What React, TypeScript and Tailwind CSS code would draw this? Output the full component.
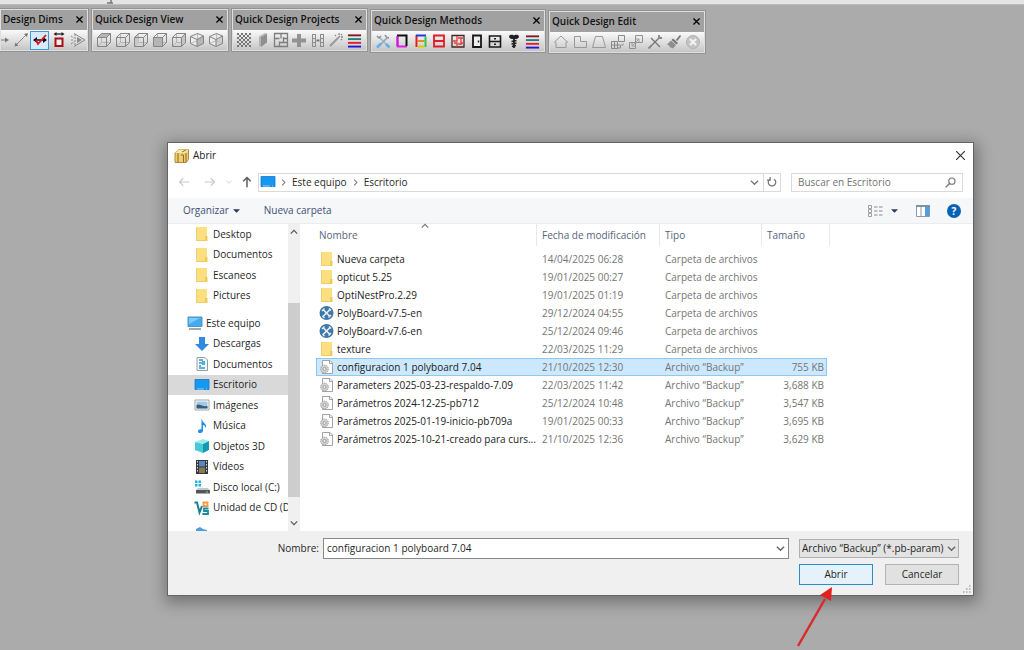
import { useState } from "react";
import type { ReactNode } from "react";

interface SvgProps {
  children: ReactNode;
  className?: string;
}

function Glyph({ children, className = "size-4" }: SvgProps) {
  return (
    <svg viewBox="0 0 16 16" fill="none" className={`${className} shrink-0`} aria-hidden="true">
      {children}
    </svg>
  );
}

/* ---------- toolbar icons ---------- */

function Cube({ face }: { face: "top" | "none" | "left" | "front" | "right" }) {
  return (
    <Glyph>
      <path d="M5.5 1.5h9v9h-9zM1.5 14.5l4-4" stroke="#b4b4b4" />
      {face === "top" && <path d="M1.5 5.5l4-4h9l-4 4z" fill="#b5b5b5" />}
      {face === "left" && <path d="M1.5 5.5l4-4v9l-4 4z" fill="#c9c9c9" />}
      {face === "front" && <path d="M1.5 5.5h9v9h-9z" fill="#b5b5b5" />}
      {face === "right" && <path d="M10.5 5.5l4-4v9l-4 4z" fill="#c4c4c4" />}
      <path d="M1.5 5.5h9v9h-9zM1.5 5.5l4-4h9v9l-4 4M10.5 5.5l4-4" stroke="#858585" />
    </Glyph>
  );
}

function IsoCube({ side }: { side: "left" | "right" }) {
  return (
    <Glyph>
      <path d="M1.5 4.5L8.500 1.500l6 2.500v7.500L8 14.500l-6.500-3z" fill="#ececec" />
      <path d={side === "left" ? "M8 7.500l6.500-3.500v7.500L8 14.500z" : "M8 7.500l6.500-3.500v7.500L8 14.500z"} fill={side === "left" ? "#b5b5b5" : "#cfcfcf"} />
      <path d="M1.500 11.500L8.500 8.500l6 3M8.500 1.500v7" stroke="#bbb" />
      <path d="M1.500 4.500L8.500 1.500l6 2.500v7.500L8 14.500l-6.500-3zM1.500 4.500L8 7.500l6.500-3.500M8 7.500v7" stroke="#858585" />
    </Glyph>
  );
}

const dims: [string, ReactNode][] = [
  ["Cota horizontal", <Glyph><path d="M0 8h12" stroke="#777" /><path d="M11 5.500L15 8l-4 2.500z" fill="#777" /></Glyph>],
  ["Cota diagonal", <Glyph><path d="M3 13L14 2" stroke="#888" /><path d="M1.500 14.500l1-4 3 3zM15 1l-4 1 3 3z" fill="#777" /></Glyph>],
  ["Cota rápida", <Glyph><path d="M2 8h12" stroke="#111" strokeWidth="1.500" /><path d="M1 8l4-3v6zM15 8l-4-3v6z" fill="#111" /><path d="M4 8l2 4 8-9" stroke="#d9141e" strokeWidth="1.800" /></Glyph>],
  ["Cota total", <Glyph><path d="M4 2h8" stroke="#222" strokeWidth="1.300" /><path d="M2.500 2l3-2v4zM13.500 2l-3-2v4z" fill="#222" /><path d="M4.500 6.500h7v7.500h-7z" stroke="#a80f17" strokeWidth="2" fill="#eee" /></Glyph>],
  ["Cota de ángulo", <Glyph><path d="M4 1.500L15 8 4 14.500" stroke="#888" /><path d="M5 2v12M1 4l3 2M1 8h3M1 12l3-2" stroke="#888" strokeDasharray="2 1" /><path d="M7 5l5 3-5 3z" fill="#8a8a8a" /></Glyph>],
];

const views: [string, ReactNode][] = [
  ["Arriba", <Cube face="top" />],
  ["Abajo", <Cube face="none" />],
  ["Izquierda", <Cube face="left" />],
  ["Frente", <Cube face="front" />],
  ["Derecha", <Cube face="right" />],
  ["Isométrica", <IsoCube side="left" />],
  ["Isométrica trasera", <IsoCube side="right" />],
];

const Stripes = () => (
  <Glyph className="size-[15px]">
    <path d="M1 2.500h14" stroke="#7d1c20" strokeWidth="2" />
    <path d="M1 6.500h14" stroke="#237f7c" strokeWidth="2" />
    <path d="M1 10.500h14" stroke="#e31d2b" strokeWidth="2" />
    <path d="M1 14.500h14" stroke="#2418d4" strokeWidth="2" />
  </Glyph>
);

const projects: [string, ReactNode][] = [
  ["Material", <Glyph>{[1, 3, 5, 7, 9, 11, 13].map((y, i) => <path key={y} d={i % 2 ? `M3 ${y + 1}h12` : `M1 ${y + 1}h14`} stroke="#777" strokeWidth="2" strokeDasharray="2 2" />)}</Glyph>],
  ["Panel", <Glyph><path d="M6 5l6-3.500v9L6 15z" fill="#8f8f8f" /><path d="M4 4.500l6-3.500 2 .500L6 5v10l-2-1z" fill="#b3b3b3" /></Glyph>],
  ["Plano", <Glyph><path d="M1.500 1.500h13v13h-13zM8 1.500v5M1.500 6.500h5M10 6.500h4.500M6.500 9.500v5M6.500 10.500h8M10.500 5v5" stroke="#7d7d7d" strokeWidth="1.300" /></Glyph>],
  ["Añadir", <Glyph><path d="M6 2h4v4.500h5v4h-5V15H6v-4.500H1v-4h5z" fill="#929292" /></Glyph>],
  ["Módulos", <Glyph><path d="M2.500 2v12.500M5.500 2v12.500M10.500 2v12.500M13.500 2v12.500M2 2.500h4M2 6.500h4M2 10.500h4M2 14.500h4M10 2.500h4M10 6.500h4M10 10.500h4M10 14.500h4" stroke="#8c8c8c" /><path d="M6.500 8.500h3" stroke="#777" strokeWidth="2" /></Glyph>],
  ["Asistente", <Glyph><path d="M2 14l8-8" stroke="#999" strokeWidth="2" /><path d="M10 6l2-2M11 1v2M15 5h-2M14 2l-1 1M13 7l1 1M7 3l1 1" stroke="#888" strokeWidth="1.300" /></Glyph>],
  ["Capas", <Stripes />],
];

const methods: [string, ReactNode][] = [
  ["Herramientas", <Glyph><path d="M4 4l8 8" stroke="#8fbbd8" strokeWidth="1.600" /><path d="M12 5l-8 8" stroke="#96a4ad" strokeWidth="1.600" /><path d="M2 3l2 2 2-2M10 2c1 2 2 3 4 3" stroke="#84949e" strokeWidth="1.500" /><path d="M2 14.500l4-4M11 11l3.500 3.500" stroke="#64b1e6" strokeWidth="2.600" /></Glyph>],
  ["Estructura", <Glyph><path d="M3.500 3v11M3 13.500h10" stroke="#e31ee8" strokeWidth="2" /><path d="M3 2.500h9.500V13" stroke="#111" strokeWidth="2" /><path d="M3.500 3.500V13" stroke="#c51ed0" strokeWidth="2" /></Glyph>],
  ["Zonas", <Glyph><path d="M3.500 2v12" stroke="#e51c24" strokeWidth="2" /><path d="M3 2.500h10" stroke="#2438df" strokeWidth="2" /><path d="M12.500 3.500v10.500" stroke="#25c94b" strokeWidth="2" /><path d="M4.500 8h7" stroke="#e8892a" strokeWidth="2" /><path d="M4.500 13.500h7" stroke="#dcc80d" strokeWidth="2" /></Glyph>],
  ["Estantes", <Glyph><path d="M3 2.500h10v11H3zM3 8h10" stroke="#df1c27" strokeWidth="1.800" /></Glyph>],
  ["Divisiones", <Glyph><path d="M2 2.500h12v11.500H2z" stroke="#472529" strokeWidth="1.300" /><path d="M7 3v5H3M8 5h5M11 5v5h3M7 14v-4H4M8 11h4" stroke="#e3403b" strokeWidth="1.300" /></Glyph>],
  ["Puerta", <Glyph><path d="M4 2.500h8v11.500H4z" stroke="#171717" strokeWidth="1.800" fill="#eee" /><path d="M9.500 7.500v2" stroke="#222" strokeWidth="1.500" /></Glyph>],
  ["Cajones", <Glyph><path d="M2.500 3h11v11h-11zM2.500 8.500h11" stroke="#191919" strokeWidth="1.600" /><path d="M7 5.800h2M7 11.300h2" stroke="#222" strokeWidth="1.500" /></Glyph>],
  ["Herrajes", <Glyph><path d="M3 3.500C3 1.500 7 1.500 8 2.500c1-1 5-1 5 1S10.500 6 9.500 6h-3C5.500 6 3 5.500 3 3.500z" fill="#202020" /><path d="M8 6v9" stroke="#202020" strokeWidth="1.800" /><path d="M5.500 8.500l5-1M5.500 11l5-1M6 13.500l4-1" stroke="#202020" strokeWidth="1.300" /></Glyph>],
  ["Capas", <Stripes />],
];

const edits: [string, ReactNode][] = [
  ["Casa", <Glyph><path d="M1.500 8L8 2l6.500 6-1.500.500v5H3v-5z" stroke="#999" /></Glyph>],
  ["Esquina", <Glyph><path d="M2.500 2.500h6v5h6v6h-12z" stroke="#999" /></Glyph>],
  ["Trapecio", <Glyph><path d="M4.500 2.500h7l3 11h-13z" stroke="#999" /></Glyph>],
  ["Dividir", <Glyph><path d="M8.500 1.500h6v6h-6zM1.500 7.500h6v7h-6zM1.500 11h6M4.500 7.500v7M7.500 11h3v3h-3" stroke="#898989" /><path d="M11 11l3-2-1 3z" fill="#999" /></Glyph>],
  ["Escalar", <Glyph><path d="M7.500 1.500h7v7h-7zM1.500 8.500h6v6h-6z" stroke="#909090" /><path d="M4 12l7-7M8 5h3v3M4 9v3h3" stroke="#a0a0a0" /></Glyph>],
  ["Cortar", <Glyph><path d="M4 4l9 9M3 13L13 3" stroke="#777" strokeWidth="1.400" /><path d="M1.500 14.500l3-3M12 1l0 3 3 0" stroke="#888" strokeWidth="1.800" /></Glyph>],
  ["Pincel", <Glyph><path d="M14.500 1.500l-4 5" stroke="#777" strokeWidth="1.800" /><path d="M7 4.500l5 4.500-1.500 1.500-5-4.500z" fill="#777" /><path d="M5 6.500l5 4.500-3 3.500-2-1-1 0-1-2-2-1z" fill="#8f8f8f" /></Glyph>],
  ["Cancelar", <Glyph><circle cx="8" cy="8" r="6.500" fill="#c3c3c3" stroke="#b3b3b3" /><path d="M5 5l6 6M11 5l-6 6" stroke="#f2f2f2" strokeWidth="2.200" /></Glyph>],
];

interface ToolbarProps {
  title: string;
  tools: [string, ReactNode][];
  className: string;
  active?: number;
  cut?: boolean;
}

function Toolbar({ title, tools, className, active, cut }: ToolbarProps) {
  return (
    <section className={`${className} shrink-0 overflow-hidden border border-[#dedede] shadow-[0_0_0_1px_#939393]`}>
      <header className="flex h-5 items-center justify-between bg-[#a1a1a1] pb-0.5 pl-0.5 pr-0.5">
        <h2 className="whitespace-nowrap text-[10px] font-semibold text-[#111]">{title}</h2>
        <button aria-label={`Cerrar ${title}`} className="p-0.5 text-black">
          <svg viewBox="0 0 8 8" className="size-[7px]"><path d="M.500.500l7 7M7.500.500l-7 7" stroke="currentColor" strokeWidth="1.500" /></svg>
        </button>
      </header>
      <div className={`flex h-5 items-center bg-linear-to-b from-[#fafafa] to-[#c6c6c6] ${cut ? "justify-end" : "px-0.5"}`}>
        {tools.map(([label, icon], i) => (
          <button
            key={label}
            aria-label={label}
            className={`flex h-[19px] items-center justify-center ${cut ? "w-[19px] shrink-0" : "min-w-0 flex-1"} ${i === active ? "border border-[#3c9bd6] bg-[#d5ebf9]" : ""}`}
          >
            {icon}
          </button>
        ))}
      </div>
    </section>
  );
}

/* ---------- file icons ---------- */

const Folder = () => (
  <Glyph>
    <path d="M2 1h11v14H2z" fill="#fbdf80" />
    <path d="M2 1h1v14H2z" fill="#f0cf6c" />
    <path d="M11 10h2.500v5H11z" fill="#f0c95a" />
    <path d="M2 14.500h11" stroke="#f0cc66" />
  </Glyph>
);

const BackupFile = () => (
  <Glyph>
    <path d="M3.500 1.500h7.500l2.500 2.500v10.500H3.500z" fill="#fdfdfd" stroke="#a3a3a3" />
    <path d="M10.500 1.500V4.500h3" stroke="#a3a3a3" />
    <circle cx="5.500" cy="10" r="3.800" fill="#d8d8d8" stroke="#999" strokeDasharray="1.500 .6" />
    <circle cx="5.500" cy="10" r="1.600" fill="#eee" stroke="#999" />
  </Glyph>
);

const PolyBoard = () => (
  <Glyph>
    <circle cx="7.500" cy="8" r="7" fill="#3f78a8" />
    <path d="M4 4.500l7 7M11 4.500l-7 7" stroke="#e7f1f8" strokeWidth="1.600" />
    <path d="M3 6l2.500-2.500M9.500 12.500L12 10M10 3.500L12 5.500M3.500 11l2 2" stroke="#e7f1f8" strokeWidth="1.400" />
  </Glyph>
);

const Screen = () => (
  <Glyph>
    <path d="M1 2.500h14v10H1z" fill="#1697f0" />
    <path d="M1 2.500h14v10H1z" stroke="#0d79cc" strokeWidth=".8" />
    <path d="M3 12h7M12 12h1" stroke="#b6e0ff" strokeWidth=".8" />
  </Glyph>
);

const Computer = () => (
  <Glyph>
    <path d="M1 2h14v9.500H1z" fill="#42aaf0" stroke="#5792bb" />
    <path d="M2 3h11L2 9z" fill="#79cdfb" />
    <path d="M2 14h12" stroke="#7c8d98" strokeWidth="1.500" />
  </Glyph>
);

interface Place {
  name: string;
  icon: ReactNode;
  root?: boolean;
  current?: boolean;
}

const quickAccess: Place[] = ["Desktop", "Documentos", "Escaneos", "Pictures"].map((name) => ({ name, icon: <Folder /> }));

const thisPc: Place[] = [
  { name: "Este equipo", icon: <Computer />, root: true },
  { name: "Descargas", icon: <Glyph><path d="M5 1h6v7h4l-7 7-7-7h4z" fill="#2f8be0" /></Glyph> },
  { name: "Documentos", icon: <Glyph><path d="M3 1.500h8l2.500 2.500v10.500H3z" fill="#f4f8fa" stroke="#8ea0aa" /><path d="M5 4h4M5 7h6M5 10h2M5 12h6" stroke="#369bc9" strokeWidth="1.300" /><path d="M8 5h3v4H8z" fill="#4ab1d6" /></Glyph> },
  { name: "Escritorio", icon: <Screen />, current: true },
  { name: "Imágenes", icon: <Glyph><path d="M1 3h14v10H1z" fill="#fff" stroke="#9ba5aa" /><path d="M2.500 4.500h11v7h-11z" fill="#9ecbe8" /><path d="M2.500 8c3-2 5 2 11 1v2.500h-11z" fill="#375f7b" /></Glyph> },
  { name: "Música", icon: <Glyph><path d="M8 1c0 4 5 4 4 9-1-2-2-3-3-3v5.500c0 3-5 3.500-5 1 0-2 2-2.500 3.500-2V1z" fill="#1b8ee5" /></Glyph> },
  { name: "Objetos 3D", icon: <Glyph><path d="M1 4l8-3 6 2-6 3z" fill="#9deaf0" /><path d="M1 4l8 2v9l-8-3z" fill="#47c9d8" /><path d="M9 6l6-3v9l-6 3z" fill="#1599b0" /></Glyph> },
  { name: "Vídeos", icon: <Glyph><path d="M2 1h12v14H2z" fill="#333941" /><path d="M5 2h6v5.500H5z" fill="#5b85bd" /><path d="M5 8.500h6V14H5z" fill="#8a7951" /><path d="M3.500 2v12M12.500 2v12" stroke="#d8d8d8" strokeDasharray="1.500 1.500" /></Glyph> },
  { name: "Disco local (C:)", icon: <Glyph><path d="M1 1.500h2.500V4H1zM4.500 1.500H7V4H4.500zM1 5h2.500v2.500H1zM4.500 5H7v2.500H4.500z" fill="#20b2df" /><path d="M4 9h10l2 2.500H2z" fill="#c3c8cb" /><path d="M2 11h14v3.500H2z" fill="#50585e" /><path d="M12 13h2" stroke="#7fe07b" /></Glyph> },
  { name: "Unidad de CD (D", icon: <Glyph><path d="M.500 2.500H3l2.500 10L8 6" stroke="#168098" strokeWidth="2" /><path d="M14.500 8.500H10v2.500h4v3H8.500" stroke="#1a8b9f" strokeWidth="1.800" /><path d="M9.500 2.500h4V6h-4z" stroke="#f39a43" strokeWidth="1.800" /></Glyph> },
];

function PlaceList({ places, className }: { places: Place[]; className: string }) {
  return (
    <ul className={`grid auto-rows-fr ${className}`}>
      {places.map((p) => (
        <li key={p.name} className={`flex items-center ${p.current ? "bg-[#d9d9d9]" : ""}`}>
          <a href="#" className={`flex items-center gap-[3px] whitespace-nowrap ${p.root ? "pl-[19px]" : "pl-[26px]"}`}>
            {p.icon}
            {p.name}
          </a>
        </li>
      ))}
    </ul>
  );
}

interface FileRow {
  name: string;
  date: string;
  kind: "folder" | "app" | "backup";
  size?: string;
}

const files: FileRow[] = [
  { name: "Nueva carpeta", date: "14/04/2025 06:28", kind: "folder" },
  { name: "opticut 5.25", date: "19/01/2025 00:27", kind: "folder" },
  { name: "OptiNestPro.2.29", date: "19/01/2025 01:19", kind: "folder" },
  { name: "PolyBoard-v7.5-en", date: "29/12/2024 04:55", kind: "app" },
  { name: "PolyBoard-v7.6-en", date: "25/12/2024 09:46", kind: "app" },
  { name: "texture", date: "22/03/2025 11:29", kind: "folder" },
  { name: "configuracion 1 polyboard 7.04", date: "21/10/2025 12:30", kind: "backup", size: "755 KB" },
  { name: "Parameters 2025-03-23-respaldo-7.09", date: "22/03/2025 11:42", kind: "backup", size: "3,688 KB" },
  { name: "Parámetros 2024-12-25-pb712", date: "25/12/2024 10:48", kind: "backup", size: "3,547 KB" },
  { name: "Parámetros 2025-01-19-inicio-pb709a", date: "19/01/2025 00:33", kind: "backup", size: "3,695 KB" },
  { name: "Parámetros 2025-10-21-creado para curs...", date: "21/10/2025 12:36", kind: "backup", size: "3,629 KB" },
];

const fileIcons = { folder: <Folder />, app: <PolyBoard />, backup: <BackupFile /> };

function Chevron({ className = "size-2", d = "M1 3l4 4 4-4" }: { className?: string; d?: string }) {
  return (
    <svg viewBox="0 0 10 10" fill="none" className={className} aria-hidden="true">
      <path d={d} stroke="currentColor" strokeWidth="1.500" />
    </svg>
  );
}

function FileTable() {
  const [selected, setSelected] = useState("configuracion 1 polyboard 7.04");

  return (
    <table className="w-[514px] table-fixed border-separate border-spacing-0 text-left">
      <colgroup>
        <col className="w-[221px]" />
        <col className="w-[123px]" />
        <col className="w-[102px]" />
        <col className="w-[65px]" />
        <col className="w-[3px]" />
      </colgroup>
      <thead className="text-[#56647c]">
        <tr className="h-[22px]">
          <th className="relative border-r border-[#e8e8e8] p-0 pl-[3px] font-normal">
            Nombre
            <Chevron d="M1 7l4-4 4 4" className="absolute -top-0.5 left-[105px] size-2 text-[#777]" />
          </th>
          <th className="whitespace-nowrap border-r border-[#e8e8e8] p-0 pl-[5px] font-normal">Fecha de modificación</th>
          <th className="border-r border-[#e8e8e8] p-0 pl-[5px] font-normal">Tipo</th>
          <th className="p-0 pl-[5px] font-normal">Tamaño</th>
          <th className="border-r border-[#e8e8e8] p-0" />
        </tr>
      </thead>
      <tbody className="text-[#757575]">
        <tr className="h-1" aria-hidden="true">
          <td className="p-0" />
        </tr>
        {files.map((f) => {
          const cell = f.name === selected ? "border-y border-[#93c8ee] bg-[#cce8ff]" : "border-y border-transparent";
          return (
            <tr key={f.name} className="h-[18px] whitespace-nowrap leading-4" onClick={() => setSelected(f.name)}>
              <td className={`${cell} border-l p-0 pl-0.5 text-[#1b1b1b]`}>
                <span className="flex items-center gap-0.5">
                  {fileIcons[f.kind]}
                  {f.name}
                </span>
              </td>
              <td className={`${cell} p-0 pl-[5px]`}>{f.date}</td>
              <td className={`${cell} p-0 pl-[5px]`}>{f.kind === "backup" ? "Archivo “Backup”" : "Carpeta de archivos"}</td>
              <td className={`${cell} border-r p-0 pr-0.5 text-right`}>{f.size}</td>
            </tr>
          );
        })}
      </tbody>
    </table>
  );
}

function AddressBar() {
  return (
    <div className="flex h-[30px] items-center px-[10px] pb-0.5">
      <nav className="flex w-[80px] shrink-0 items-center text-[#c9c9c9]">
        <button aria-label="Atrás"><Glyph className="size-3"><path d="M15 8H2M7 3L2 8l5 5" stroke="currentColor" strokeWidth="1.500" /></Glyph></button>
        <button aria-label="Adelante" className="ml-[14px]"><Glyph className="size-3"><path d="M1 8h13M9 3l5 5-5 5" stroke="currentColor" strokeWidth="1.500" /></Glyph></button>
        <button aria-label="Recientes" className="ml-[10px]"><Chevron className="size-1.5" /></button>
        <button aria-label="Subir" className="ml-[9px] text-[#5f5f5f]"><Glyph className="size-3"><path d="M8 15V2M3 7l5-5 5 5" stroke="currentColor" strokeWidth="2" /></Glyph></button>
      </nav>
      <div className="flex h-[19px] flex-1 items-center border border-[#dadada]">
        <div className="flex flex-1 items-center gap-1 pl-px text-[#2a2a2a]">
          <Screen />
          <Chevron d="M3 1l4 4-4 4" className="size-[7px] text-[#777]" />
          <a href="#" className="px-px">Este equipo</a>
          <Chevron d="M3 1l4 4-4 4" className="size-[7px] text-[#777]" />
          <a href="#" className="px-px">Escritorio</a>
        </div>
        <button aria-label="Ubicaciones anteriores" className="px-1 text-[#777]"><Chevron className="size-[9px]" /></button>
        <button aria-label="Actualizar" className="flex h-full w-[17px] items-center justify-center border-l border-[#dadada] text-[#777]">
          <Glyph className="size-[10px]"><path d="M11.500 3.500A6 6 0 1 1 4.500 3.500M5 0v5H0" stroke="currentColor" strokeWidth="2" /></Glyph>
        </button>
      </div>
      <label className="ml-[10px] flex h-[19px] w-[172px] items-center border border-[#dadada] px-1.5">
        <input type="search" aria-label="Buscar en Escritorio" placeholder="Buscar en Escritorio" className="min-w-0 flex-1 outline-none placeholder:text-[#747474]" />
        <Glyph className="size-[11px]"><circle cx="10" cy="6" r="4.500" stroke="#777" strokeWidth="1.700" /><path d="M7 9l-6 6" stroke="#777" strokeWidth="2" /></Glyph>
      </label>
    </div>
  );
}

function CommandBar() {
  return (
    <div className="flex h-[26px] items-center border-b border-[#e9edf0] bg-[#f5f7f9] pl-[15px] pr-3 text-[#3f4e74]">
      <button className="flex items-center gap-1">
        Organizar
        <svg viewBox="0 0 8 4" className="h-1 w-[7px]"><path d="M0 0h8L4 4z" fill="#2b3a5a" /></svg>
      </button>
      <button className="ml-6">Nueva carpeta</button>
      <div className="ml-auto flex items-center">
        <button aria-label="Cambiar la vista" className="flex items-center gap-2">
          <Glyph>
            <path d="M1.500 2.500h3v3h-3zM1.500 6.500h3v3h-3zM1.500 10.500h3v3h-3z" stroke="#a0a0a0" />
            <path d="M7 4h3.500M12 4h3.500M7 8h3.500M12 8h3.500M7 12h3.500M12 12h3.500" stroke="#888" />
          </Glyph>
          <svg viewBox="0 0 8 4" className="h-1 w-[7px]"><path d="M0 0h8L4 4z" fill="#2b3a5a" /></svg>
        </button>
        <button aria-label="Panel de vista previa" className="ml-[17px]">
          <Glyph><path d="M1.500 3h13v10.500h-13zM6 3v10" stroke="#8b9aa7" fill="#fff" /><path d="M10 3.500h4.500v9.500H10z" fill="#4f9ee0" /><path d="M1 3h14" stroke="#6b8197" strokeWidth="1.500" /></Glyph>
        </button>
        <button aria-label="Ayuda" className="ml-4 flex size-[14px] items-center justify-center rounded-full bg-[#0862b4] text-[10px] font-bold leading-none text-white">?</button>
      </div>
    </div>
  );
}

function OpenDialog() {
  const [fileName, setFileName] = useState("configuracion 1 polyboard 7.04");

  return (
    <section
      role="dialog"
      aria-labelledby="dialog-title"
      className="relative ml-[167px] mr-[50px] border border-[#646464] bg-white shadow-[1px_4px_14px_3px_rgba(0,0,0,0.32)]"
    >
      <header className="flex h-[25px] items-center gap-[3px] pl-1.5 pr-2">
        <Glyph>
          <path d="M1 5l4-3.500h9.500v10L12 14.500H1z" fill="#f0cd6e" stroke="#b08c3c" />
          <path d="M1 5l4-3.500h9.500L12 5z" fill="#fae7ac" />
          <path d="M4 5v9.500M7 7h2.500v7M12 5v9.500M8 4l4-2" stroke="#8e6c2a" />
        </Glyph>
        <h1 id="dialog-title" className="text-[#222]">Abrir</h1>
        <button aria-label="Cerrar" className="ml-auto text-[#333]">
          <svg viewBox="0 0 10 10" className="size-[9px]"><path d="M0 0l10 10M10 0L0 10" stroke="currentColor" strokeWidth="1.300" /></svg>
        </button>
      </header>
      <AddressBar />
      <CommandBar />

      <div className="flex h-[307px]">
        <nav className="w-[120px] shrink-0 overflow-hidden text-[#1f1f1f]">
          <PlaceList places={quickAccess} className="h-[82px]" />
          <PlaceList places={thisPc} className="mt-[7px] h-[205px]" />
          <div className="mt-2 pl-[26px]">
            <Glyph><path d="M2 3l4-2 3 2 4 1v9H2z" fill="#4aa1dc" /></Glyph>
          </div>
        </nav>
        <div className="flex w-3 shrink-0 flex-col items-center bg-[#f0f0f0] text-[#555]">
          <Chevron d="M1 7l4-4 4 4" className="my-1 size-2" />
          <div className="mt-[63px] w-full flex-1 bg-[#cdcdcd]" />
          <Chevron className="mb-1 mt-[22px] size-2" />
        </div>
        <div className="min-w-0 flex-1 pl-4">
          <FileTable />
        </div>
      </div>

      <footer className="bg-[#f0f0f0] pb-[10px] pr-[14px] pt-[7px]">
        <div className="flex items-center">
          <label htmlFor="file-name" className="w-[155px] pr-1 text-right text-[#1f1f1f]">Nombre:</label>
          <div className="flex h-[21px] flex-1 items-center border border-[#8a8a8a] bg-white pr-[3px]">
            <input
              id="file-name"
              value={fileName}
              onChange={(e) => setFileName(e.target.value)}
              className="min-w-0 flex-1 pl-[3px] text-[#1f1f1f] outline-none"
            />
            <button aria-label="Nombres recientes" className="text-[#666]"><Chevron className="size-[9px]" /></button>
          </div>
          <div className="ml-[10px] grid w-[160px] grid-cols-1 items-center">
            <select aria-label="Tipo de archivo" className="col-start-1 row-start-1 h-[19px] w-full appearance-none border border-[#b0b0b0] bg-[#e3e3e3] pl-0.5 text-[#1f1f1f]">
              <option>Archivo “Backup” (*.pb-param)</option>
            </select>
            <Chevron className="pointer-events-none col-start-1 row-start-1 mr-[3px] size-[9px] justify-self-end text-[#666]" />
          </div>
        </div>
        <div className="mt-[5px] flex justify-end gap-3 text-[#1f1f1f]">
          <div className="relative">
            <button className="h-[21px] w-[74px] border border-[#2b8ccb] bg-[#e5f1fb]">Abrir</button>
            {/* pointer to the confirm button */}
            <svg viewBox="0 0 40 64" className="pointer-events-none absolute -left-1 top-[22px] h-16 w-10" aria-hidden="true">
              <path d="M3 60L30 13" stroke="#d92b2b" strokeWidth="2.500" />
              <path d="M37 1L36 15 25 9z" fill="#e32020" />
            </svg>
          </div>
          <button className="h-[21px] w-[74px] border border-[#b3b3b3] bg-[#e1e1e1]">Cancelar</button>
        </div>
        <svg viewBox="0 0 8 8" className="absolute bottom-0.5 right-0.5 size-2" aria-hidden="true">
          <path d="M6 1h1.500M3 4h1.500M6 4h1.500M0 7h1.500M3 7h1.500M6 7h1.500" stroke="#a8a8a8" strokeWidth="1.500" />
        </svg>
      </footer>
    </section>
  );
}

export default function App() {
  return (
    <main className="min-h-screen overflow-hidden bg-[#ababab] font-['Open_Sans','Noto_Sans',sans-serif] text-[10px]">
      <div className="flex h-[5px] items-end border-b border-[#bdbdbd] bg-[#e4e4e4]">
        <svg viewBox="0 0 8 4" className="ml-[106px] h-1 w-2" aria-hidden="true"><path d="M1 3h6M5 0v3" stroke="#777" strokeWidth="1.500" /></svg>
      </div>
      <div className="flex h-[137px] items-start gap-1 pt-1">
        <Toolbar title="Design Dims" tools={dims} active={2} cut className="w-[88px]" />
        <Toolbar title="Quick Design View" tools={views} className="w-[136px]" />
        <Toolbar title="Quick Design Projects" tools={projects} className="w-[135px]" />
        <Toolbar title="Quick Design Methods" tools={methods} className="mt-px w-[174px]" />
        <Toolbar title="Quick Design Edit" tools={edits} className="mt-0.5 w-[156px]" />
      </div>
      <OpenDialog />
    </main>
  );
}
